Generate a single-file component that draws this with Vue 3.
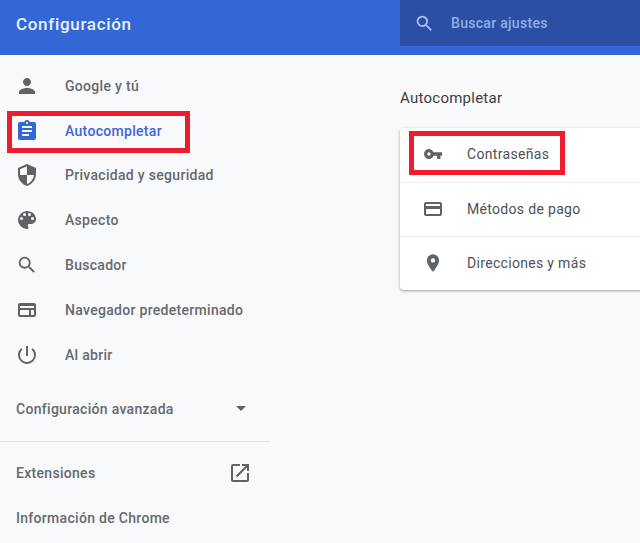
<script setup>
const navItems = [
  { label: 'Google y tú', d: 'M12 12c2.2 0 4-1.8 4-4s-1.8-4-4-4-4 1.8-4 4 1.8 4 4 4zm0 2c-2.7 0-8 1.3-8 4v2h16v-2c0-2.7-5.3-4-8-4z' },
  { label: 'Autocompletar', active: true, d: 'M19 3h-4.2C14.4 1.8 13.3 1 12 1s-2.4.8-2.8 2H5c-1.1 0-2 .9-2 2v14c0 1.1.9 2 2 2h14c1.1 0 2-.9 2-2V5c0-1.1-.9-2-2-2zm-7 0c.6 0 1 .4 1 1s-.4 1-1 1-1-.4-1-1 .4-1 1-1zm2 14H7v-2h7v2zm3-4H7v-2h10v2zm0-4H7V7h10v2z' },
  { label: 'Privacidad y seguridad', d: 'M12 1 3 5v6c0 5.55 3.84 10.74 9 12 5.16-1.26 9-6.45 9-12V5l-9-4zm0 10.99h7c-.53 4.12-3.28 7.79-7 8.94V12H5V6.3l7-3.11v8.8z' },
  { label: 'Aspecto', d: 'M12 3a9 9 0 0 0 0 18c.83 0 1.5-.67 1.5-1.5 0-.39-.15-.74-.39-1.01-.23-.26-.38-.61-.38-.99 0-.83.67-1.5 1.5-1.5H16c2.76 0 5-2.24 5-5 0-4.42-4.03-8-9-8zm-5.5 9a1.5 1.5 0 1 1 0-3 1.5 1.5 0 0 1 0 3zm3-4a1.5 1.5 0 1 1 0-3 1.5 1.5 0 0 1 0 3zm5 0a1.5 1.5 0 1 1 0-3 1.5 1.5 0 0 1 0 3zm3 4a1.5 1.5 0 1 1 0-3 1.5 1.5 0 0 1 0 3z' },
  { label: 'Buscador', box: '-1 -1 26 26', d: 'M15.5 14h-.79l-.28-.27A6.47 6.47 0 0 0 16 9.5 6.5 6.5 0 1 0 9.5 16c1.61 0 3.09-.59 4.23-1.57l.27.28v.79l5 4.99L20.49 19l-4.99-5zm-6 0C7.01 14 5 11.99 5 9.5S7.01 5 9.5 5 14 7.01 14 9.5 11.99 14 9.5 14z' },
  { label: 'Navegador predeterminado', d: 'M19 5H5c-1.1 0-2 .9-2 2v10c0 1.1.9 2 2 2h14c1.1 0 2-.9 2-2V7c0-1.1-.9-2-2-2zM5 17v-5h9v5H5zm14 0h-3v-5h3v5zm0-7H5V8h14v2z' },
  { label: 'Al abrir', d: 'M13 3h-2v10h2V3zm4.83 2.17-1.42 1.42A6.92 6.92 0 0 1 19 12c0 3.87-3.13 7-7 7s-7-3.13-7-7c0-2.17.99-4.1 2.58-5.42L6.17 5.17A8.93 8.93 0 0 0 3 12a9 9 0 0 0 18 0c0-2.74-1.23-5.18-3.17-6.83z' },
]
const autofill = [
  { label: 'Contraseñas', box: '-2.67 -2.67 29.33 29.33', d: 'M12.65 10A6 6 0 1 0 12.65 14H17v4h4v-4h2v-4H12.65zM7 14a2 2 0 1 1 0-4 2 2 0 0 1 0 4z' },
  { label: 'Métodos de pago', d: 'M19 5H5c-1.1 0-2 .9-2 2v10c0 1.1.9 2 2 2h14c1.1 0 2-.9 2-2V7c0-1.1-.9-2-2-2zm0 12H5v-5h14v5zm0-8H5V7h14v2z' },
  { label: 'Direcciones y más', box: '-1.8 -1.8 27.6 27.6', d: 'M12 2a7 7 0 0 0-7 7c0 5.25 7 13 7 13s7-7.75 7-13a7 7 0 0 0-7-7zm0 9.5a2.5 2.5 0 1 1 0-5 2.5 2.5 0 0 1 0 5z' },
]
</script>

<template>
  <div class="page">
    <header class="topbar">
      <h1 class="title">Configuración</h1>
      <div class="search">
        <svg class="search-icon" viewBox="0 0 24 24"><path d="M15.5 14h-.79l-.28-.27A6.47 6.47 0 0 0 16 9.5 6.5 6.5 0 1 0 9.5 16c1.61 0 3.09-.59 4.23-1.57l.27.28v.79l5 4.99L20.49 19l-4.99-5zm-6 0C7.01 14 5 11.99 5 9.5S7.01 5 9.5 5 14 7.01 14 9.5 11.99 14 9.5 14z" /></svg>
        <span>Buscar ajustes</span>
      </div>
    </header>

    <div class="body">
      <aside class="sidebar">
        <nav class="nav">
          <div v-for="item in navItems" :key="item.label" class="nav-item" :class="{ active: item.active }">
            <svg class="icon" :viewBox="item.box || '0 0 24 24'"><path :d="item.d" /></svg>
            <span>{{ item.label }}</span>
          </div>
        </nav>
        <div class="advanced">
          <span>Configuración avanzada</span>
          <svg class="caret" viewBox="0 0 10 5"><path d="M0 0h10L5 5z" /></svg>
        </div>
        <div class="divider"></div>
        <div class="link-row">
          <span>Extensiones</span>
          <svg class="icon" viewBox="0 0 24 24"><path d="M19 19H5V5h7V3H5a2 2 0 0 0-2 2v14c0 1.1.9 2 2 2h14c1.1 0 2-.9 2-2v-7h-2v7zM14 3v2h3.59l-9.83 9.83 1.41 1.41L19 6.41V10h2V3h-7z" /></svg>
        </div>
        <div class="link-row">
          <span>Información de Chrome</span>
        </div>
      </aside>

      <main class="content">
        <h2 class="section-title">Autocompletar</h2>
        <div class="card">
          <div v-for="row in autofill" :key="row.label" class="card-row">
            <svg class="icon" :viewBox="row.box || '0 0 24 24'"><path :d="row.d" /></svg>
            <span>{{ row.label }}</span>
          </div>
        </div>
      </main>
    </div>

    <div class="mark mark-nav"></div>
    <div class="mark mark-card"></div>
  </div>
</template>

<style scoped>
.page {
  position: relative;
  width: 640px;
  height: 543px;
  overflow: hidden;
  background: #f8f9fb;
  font-family: Roboto, "Liberation Sans", sans-serif;
  font-size: 14px;
  color: #66696e;
}
.topbar {
  display: flex;
  justify-content: space-between;
  height: 55px;
  background: #3367d6;
}
.title {
  margin: 0;
  padding: 14px 0 0 16px;
  font-size: 17px;
  line-height: 21px;
  font-weight: 500;
  letter-spacing: 0.68px;
  color: #e9f0fc;
}
.search {
  display: flex;
  align-items: center;
  gap: 16px;
  width: 240px;
  height: 46px;
  padding-left: 14px;
  box-sizing: border-box;
  background: #2a4fa5;
  color: #8fb0e6;
  font-weight: 500;
  letter-spacing: 0.3px;
}
.search-icon {
  width: 21px;
  height: 21px;
  fill: #a9c3ef;
}
.body {
  display: flex;
}
.sidebar {
  width: 270px;
  flex: none;
  padding-top: 7px;
}
.nav-item {
  display: flex;
  align-items: center;
  gap: 26px;
  height: 45px;
  box-sizing: border-box;
  padding-left: 15px;
  font-weight: 500;
  letter-spacing: 0.3px;
}
.nav-item:first-child {
  padding-top: 2px;
}
.nav-item.active {
  color: #3f66d8;
  padding-top: 2px;
}
.nav-item.active .icon {
  fill: #3367d6;
}
.icon {
  flex: none;
  width: 24px;
  height: 24px;
  fill: #5f6368;
}
.advanced {
  display: flex;
  align-items: center;
  justify-content: space-between;
  height: 45px;
  margin-top: 9px;
  padding: 0 24px 0 16px;
  font-weight: 500;
  letter-spacing: 0.3px;
}
.caret {
  width: 10px;
  height: 5px;
  fill: #5f6368;
}
.divider {
  height: 1px;
  margin-top: 10px;
  background: #dfe1e5;
}
.link-row {
  display: flex;
  align-items: center;
  justify-content: space-between;
  height: 45px;
  padding: 0 18px 0 16px;
  font-weight: 500;
  letter-spacing: 0.3px;
}
.divider + .link-row {
  margin-top: 8px;
}
.content {
  flex: 1;
  padding: 32px 0 0 130px;
}
.section-title {
  margin: 0;
  font-size: 15px;
  line-height: 22px;
  font-weight: 400;
  letter-spacing: 0.25px;
  color: #3c4043;
}
.card {
  width: 260px;
  margin-top: 19px;
  background: #fff;
  border-radius: 4px 0 0 4px;
  box-shadow: 0 1px 2px rgba(60, 64, 67, 0.3), 0 1px 3px 1px rgba(60, 64, 67, 0.15);
}
.card-row {
  display: flex;
  align-items: center;
  gap: 22px;
  height: 54px;
  padding: 0 0 2px 21px;
  box-sizing: border-box;
  color: #4d5156;
  letter-spacing: 0.32px;
}
.card-row + .card-row {
  border-top: 1px solid #eceef0;
}
.mark {
  position: absolute;
  box-sizing: border-box;
  border: 5px solid #ed1c2e;
}
.mark-nav {
  left: 7px;
  top: 111px;
  width: 183px;
  height: 42px;
}
.mark-card {
  left: 409px;
  top: 131px;
  width: 156px;
  height: 44px;
}
</style>
